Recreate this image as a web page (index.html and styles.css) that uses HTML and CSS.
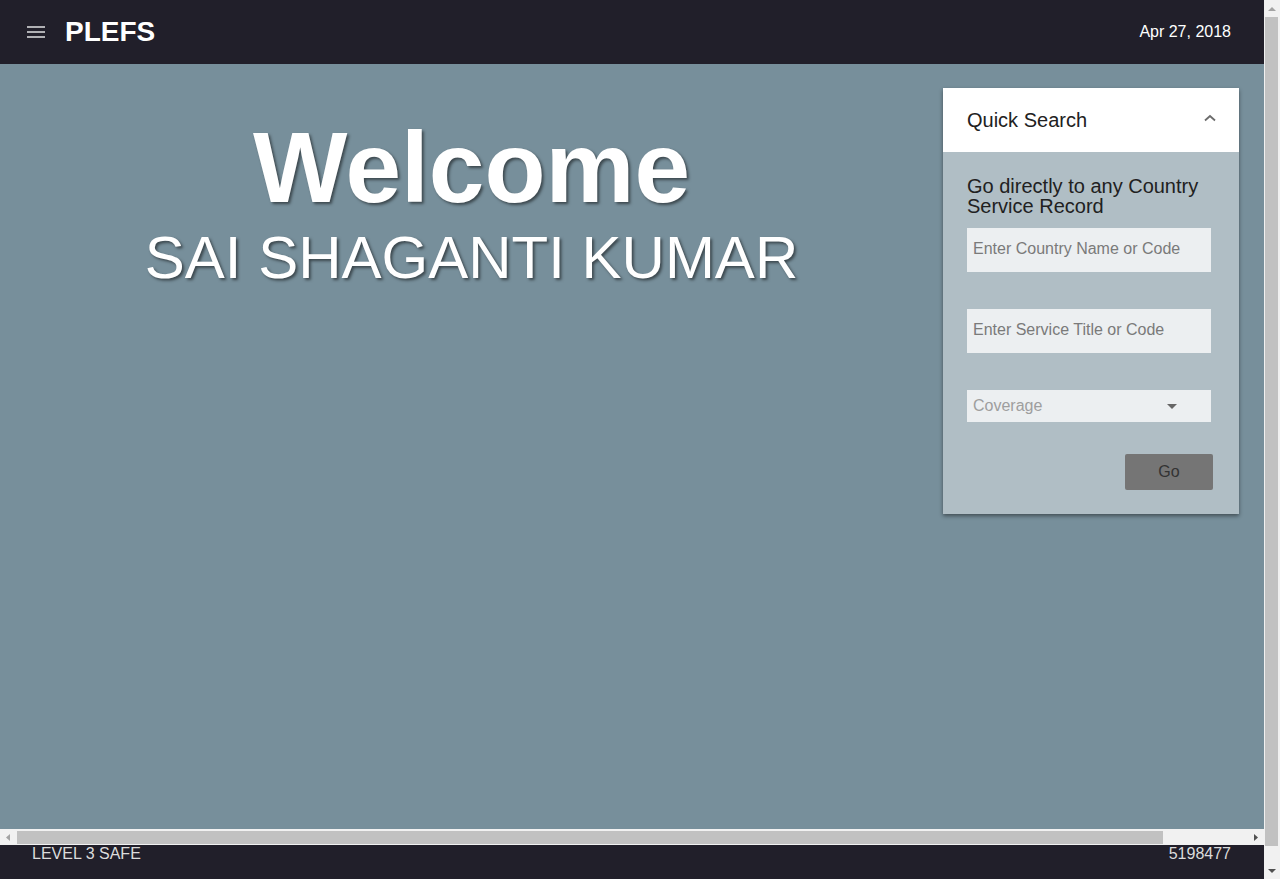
FILE: index.html
```html
<!DOCTYPE html>
<html lang="en">
<head>
<meta charset="utf-8">
<title>PLEFS</title>
<link rel="stylesheet" href="styles.css">
</head>
<body>
<div class="page">
  <header class="topbar">
    <div class="brand">
      <svg class="menu-icon" width="24" height="24" viewBox="0 0 24 24"><path fill="#b0b0b4" d="M3 18h18v-2H3v2zm0-5h18v-2H3v2zm0-7v2h18V6H3z"/></svg>
      <span class="logo">PLEFS</span>
    </div>
    <span class="date">Apr 27, 2018</span>
  </header>
  <main class="main">
    <section class="welcome">
      <h1 class="welcome-title">Welcome</h1>
      <h2 class="welcome-name">SAI SHAGANTI KUMAR</h2>
    </section>
    <aside class="card">
      <div class="card-head">
        <span class="card-title">Quick Search</span>
        <svg class="chevron" width="12" height="8" viewBox="0 0 12 8"><polyline points="1,6.5 6,2 11,6.5" fill="none" stroke="#6b6b6b" stroke-width="1.8"/></svg>
      </div>
      <div class="card-body">
        <p class="intro">Go directly to any Country Service Record</p>
        <input class="field" type="text" placeholder="Enter Country Name or Code">
        <input class="field field-gap" type="text" placeholder="Enter Service Title or Code">
        <div class="select">
          <span class="select-label">Coverage</span>
          <svg class="caret" width="10" height="5" viewBox="0 0 10 5"><polygon points="0,0 10,0 5,5" fill="#666"/></svg>
        </div>
        <button class="go" type="button">Go</button>
      </div>
    </aside>
  </main>
  <div class="hscroll">
    <div class="sb-btn">
      <svg width="4" height="7" viewBox="0 0 4 7"><polygon points="4,0 4,7 0,3.5" fill="#a3a3a3"/></svg>
    </div>
    <div class="hs-track"><div class="hs-thumb"></div></div>
    <div class="sb-btn">
      <svg width="4" height="7" viewBox="0 0 4 7"><polygon points="0,0 0,7 4,3.5" fill="#505050"/></svg>
    </div>
  </div>
  <footer class="footer">
    <span class="level">LEVEL 3 SAFE</span>
    <span class="code">5198477</span>
  </footer>
</div>
<div class="vscroll">
  <div class="vs-btn">
    <svg width="8" height="4" viewBox="0 0 8 4"><polygon points="0,4 8,4 4,0" fill="#a3a3a3"/></svg>
  </div>
  <div class="vs-track"><div class="vs-thumb"></div></div>
  <div class="vs-btn">
    <svg width="8" height="4" viewBox="0 0 8 4"><polygon points="0,0 8,0 4,4" fill="#505050"/></svg>
  </div>
</div>
</body>
</html>
```
FILE: styles.css
```css
html, body {
  margin: 0;
  padding: 0;
  height: 879px;
  overflow: hidden;
}
body {
  font-family: "Liberation Sans", Arial, sans-serif;
  background: #78909c;
  color: #fff;
  display: flex;
}
.page {
  width: 1264px;
  display: flex;
  flex-direction: column;
}
.topbar {
  height: 64px;
  flex: none;
  background: #211f2a;
  display: flex;
  align-items: center;
  justify-content: space-between;
  padding: 0 33px 0 24px;
}
.brand {
  display: flex;
  align-items: center;
  gap: 17px;
}
.menu-icon {
  display: block;
}
.logo {
  font-size: 28px;
  font-weight: bold;
  color: #fff;
}
.date {
  font-size: 16px;
  color: #fff;
}
.main {
  height: 765px;
  flex: none;
  box-sizing: border-box;
  overflow: hidden;
  background: #778f9b;
  display: flex;
  align-items: flex-start;
  padding: 24px 25px 0 0;
}
.welcome {
  flex: 1;
  text-align: center;
  padding-top: 29px;
}
.welcome-title {
  margin: 0;
  font-size: 100px;
  line-height: 100px;
  font-weight: bold;
  color: #fff;
  text-shadow: 2px 2px 3px rgba(0, 0, 0, 0.5);
}
.welcome-name {
  margin: 11px 0 0;
  font-size: 60px;
  line-height: 60px;
  font-weight: normal;
  color: #fff;
  text-shadow: 2px 2px 3px rgba(0, 0, 0, 0.5);
}
.card {
  width: 296px;
  background: #b0bec5;
  box-shadow: 0 2px 4px rgba(0, 0, 0, 0.45);
}
.card-head {
  height: 64px;
  background: #fff;
  display: flex;
  align-items: center;
  justify-content: space-between;
  padding: 0 23px 0 24px;
}
.card-title {
  font-size: 20px;
  color: #212121;
}
.chevron {
  display: block;
  margin-top: -4px;
}
.card-body {
  display: flex;
  flex-direction: column;
  padding: 24px;
}
.intro {
  margin: 0;
  font-size: 20px;
  line-height: 20px;
  color: #212121;
}
.field {
  width: 244px;
  height: 44px;
  box-sizing: border-box;
  margin-top: 12px;
  border: none;
  background: #eceff1;
  padding: 0 6px 2px;
  font-family: "Liberation Sans", Arial, sans-serif;
  font-size: 16px;
  color: #333;
  outline: none;
}
.field::placeholder {
  color: #7a7a7a;
}
.field-gap {
  margin-top: 37px;
}
.select {
  width: 244px;
  height: 32px;
  box-sizing: border-box;
  margin-top: 37px;
  background: #eceff1;
  display: flex;
  align-items: center;
  justify-content: space-between;
  padding: 0 34px 0 6px;
}
.select-label {
  font-size: 16px;
  color: #9e9e9e;
}
.caret {
  display: block;
}
.go {
  align-self: flex-end;
  margin: 32px 2px 0 0;
  width: 88px;
  height: 36px;
  border: none;
  border-radius: 2px;
  background: #757575;
  color: #333;
  font-family: "Liberation Sans", Arial, sans-serif;
  font-size: 16px;
}
.hscroll {
  height: 16px;
  flex: none;
  background: #f1f1f1;
  display: flex;
}
.sb-btn {
  width: 16px;
  flex: none;
  display: flex;
  align-items: center;
  justify-content: center;
}
.sb-btn svg {
  display: block;
}
.hs-track {
  flex: 1;
  padding: 2px 0 1px 1px;
  display: flex;
}
.hs-thumb {
  width: 1146px;
  background: #c1c1c1;
}
.footer {
  flex: 1;
  background: #211f2a;
  display: flex;
  justify-content: space-between;
  align-items: flex-start;
  padding: 0 33px 0 32px;
  line-height: 17px;
  color: #dcdcdc;
  font-size: 16px;
}
.vscroll {
  width: 16px;
  height: 879px;
  background: #f1f1f1;
  display: flex;
  flex-direction: column;
}
.vs-btn {
  height: 17px;
  flex: none;
  display: flex;
  align-items: center;
  justify-content: center;
}
.vs-btn svg {
  display: block;
}
.vs-track {
  flex: 1;
  padding: 0 2px 0 1px;
  display: flex;
  flex-direction: column;
}
.vs-thumb {
  height: 829px;
  background: #c1c1c1;
}
```
